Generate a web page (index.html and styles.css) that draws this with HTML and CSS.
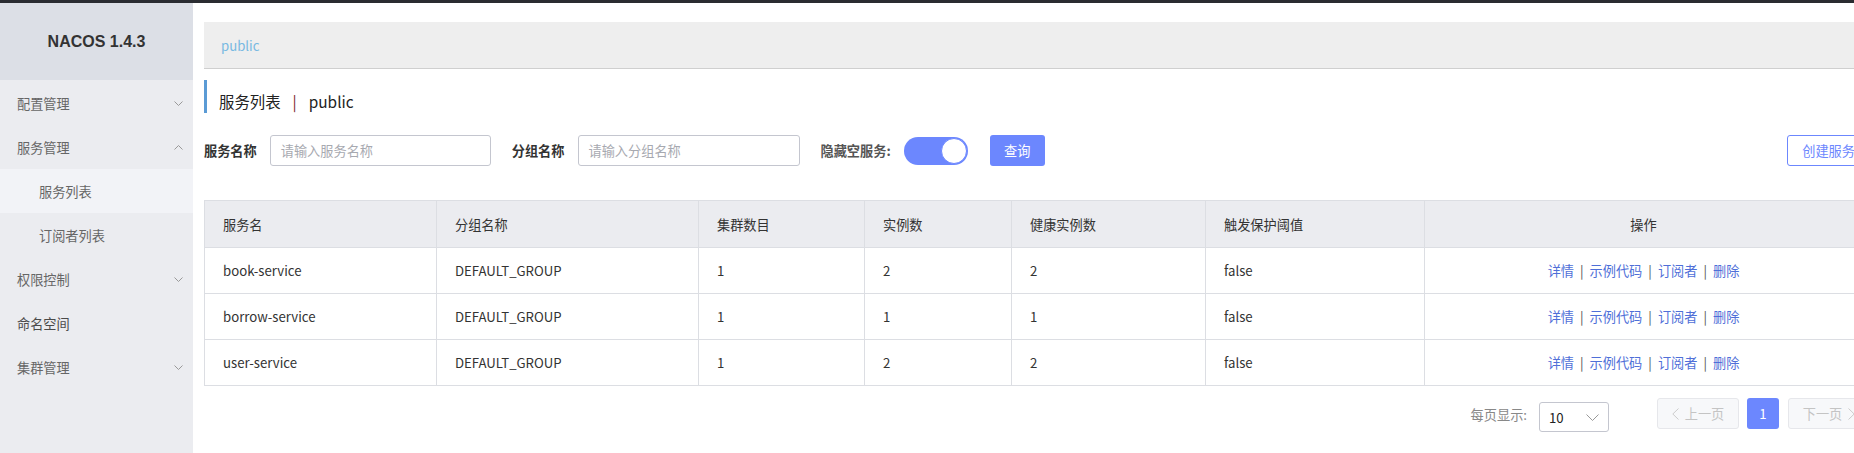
FILE: index.html
```html
<!DOCTYPE html>
<html lang="zh-CN">
<head>
<meta charset="utf-8">
<title>Nacos</title>
<link rel="stylesheet" href="styles.css">
</head>
<body>
<div class="topbar"></div>
<div class="layout">
  <aside class="sidebar">
    <div class="brand">NACOS 1.4.3</div>
    <ul class="menu">
      <li class="menu-item"><span>配置管理</span><svg class="chev" width="9" height="5" viewBox="0 0 9 5"><path d="M0.5 0.5L4.5 4.5L8.5 0.5"/></svg></li>
      <li class="menu-item"><span>服务管理</span><svg class="chev" width="9" height="5" viewBox="0 0 9 5"><path d="M0.5 4.5L4.5 0.5L8.5 4.5"/></svg></li>
      <li class="menu-item sub active"><span>服务列表</span></li>
      <li class="menu-item sub"><span>订阅者列表</span></li>
      <li class="menu-item"><span>权限控制</span><svg class="chev" width="9" height="5" viewBox="0 0 9 5"><path d="M0.5 0.5L4.5 4.5L8.5 0.5"/></svg></li>
      <li class="menu-item leaf"><span>命名空间</span></li>
      <li class="menu-item"><span>集群管理</span><svg class="chev" width="9" height="5" viewBox="0 0 9 5"><path d="M0.5 0.5L4.5 4.5L8.5 0.5"/></svg></li>
    </ul>
  </aside>
  <main class="main">
    <div class="breadcrumb"><span>public</span></div>
    <div class="page-title">服务列表<span class="sep">|</span>public</div>
    <div class="filter">
      <span class="label">服务名称</span>
      <div class="input">请输入服务名称</div>
      <span class="label label-2">分组名称</span>
      <div class="input input-2">请输入分组名称</div>
      <span class="label label-3">隐藏空服务:</span>
      <div class="switch"><span class="knob"></span></div>
      <button class="btn-primary">查询</button>
      <button class="btn-outline">创建服务</button>
    </div>
    <table class="grid">
      <colgroup>
        <col class="c1"><col class="c2"><col class="c3"><col class="c4"><col class="c5"><col class="c6"><col class="c7">
      </colgroup>
      <thead>
        <tr><th>服务名</th><th>分组名称</th><th>集群数目</th><th>实例数</th><th>健康实例数</th><th>触发保护阈值</th><th class="center">操作</th></tr>
      </thead>
      <tbody>
        <tr><td>book-service</td><td>DEFAULT_GROUP</td><td>1</td><td>2</td><td>2</td><td>false</td><td class="center ops"><a>详情</a><span class="bar">|</span><a>示例代码</a><span class="bar">|</span><a>订阅者</a><span class="bar">|</span><a>删除</a></td></tr>
        <tr><td>borrow-service</td><td>DEFAULT_GROUP</td><td>1</td><td>1</td><td>1</td><td>false</td><td class="center ops"><a>详情</a><span class="bar">|</span><a>示例代码</a><span class="bar">|</span><a>订阅者</a><span class="bar">|</span><a>删除</a></td></tr>
        <tr><td>user-service</td><td>DEFAULT_GROUP</td><td>1</td><td>2</td><td>2</td><td>false</td><td class="center ops"><a>详情</a><span class="bar">|</span><a>示例代码</a><span class="bar">|</span><a>订阅者</a><span class="bar">|</span><a>删除</a></td></tr>
      </tbody>
    </table>
    <div class="pager">
      <span class="pager-label">每页显示:</span>
      <div class="select"><span>10</span><svg width="13" height="7" viewBox="0 0 13 7"><path d="M0.5 0.5L6.5 6.5L12.5 0.5"/></svg></div>
      <button class="page-btn prev"><svg width="7" height="12" viewBox="0 0 7 12"><path d="M6.5 0.5L0.8 6L6.5 11.5"/></svg>上一页</button>
      <button class="page-num">1</button>
      <button class="page-btn next">下一页<svg width="7" height="12" viewBox="0 0 7 12"><path d="M0.5 0.5L6.2 6L0.5 11.5"/></svg></button>
    </div>
  </main>
</div>
</body>
</html>
```
FILE: styles.css
```css
html, body {
  margin: 0;
  padding: 0;
  overflow: hidden;
  background: #fff;
}
body {
  font-family: "Noto Sans CJK SC", "Noto Sans", sans-serif;
  font-size: 13.2px;
  color: #333;
  width: 1854px;
  height: 453px;
}
.topbar {
  height: 3px;
  background: #2a2c31;
}
.layout {
  display: flex;
  height: 450px;
}
.sidebar {
  flex: none;
  width: 193px;
  background: #ebecf0;
}
.brand {
  height: 77px;
  background: #dcdfe6;
  display: flex;
  align-items: center;
  justify-content: center;
  font-family: "Liberation Sans", sans-serif;
  font-weight: bold;
  font-size: 16px;
  color: #333;
}
.menu {
  list-style: none;
  margin: 1px 0 0;
  padding: 0;
}
.menu-item {
  height: 44px;
  display: flex;
  align-items: center;
  justify-content: space-between;
  padding: 0 10px 0 17px;
  color: #666;
}
.menu-item.sub {
  padding-left: 39px;
}
.menu-item.active {
  background: #f2f3f7;
}
.menu-item.leaf {
  color: #4a4a4a;
}
.chev path {
  fill: none;
  stroke: #999;
  stroke-width: 1;
}
.main {
  flex: none;
  width: 1658px;
  padding: 19px 0 0 11px;
}
.breadcrumb {
  height: 46px;
  background: #eeeeee;
  border-bottom: 1px solid #cfcfcf;
  display: flex;
  align-items: center;
  padding-left: 17px;
  color: #78b9e2;
}
.page-title {
  margin-top: 11px;
  height: 33px;
  box-sizing: border-box;
  padding-top: 8px;
  border-left: 3px solid #5b9bd5;
  padding-left: 12px;
  display: flex;
  align-items: center;
  font-size: 15.4px;
  color: #222;
}
.page-title .sep {
  margin: 0 12px;
  color: #7a1f1f;
}
.filter {
  margin-top: 22px;
  height: 31px;
  display: flex;
  align-items: center;
}
.label {
  font-weight: bold;
  color: #333;
  margin-right: 13px;
}
.label-2 {
  margin-left: 21px;
}
.label-3 {
  margin-left: 21px;
  color: #555;
}
.input {
  height: 29px;
  border: 1px solid #c4c6cf;
  border-radius: 3px;
  padding-left: 10px;
  box-sizing: content-box;
  width: 209px;
  display: flex;
  align-items: center;
  color: #a7a9b0;
}
.input-2 {
  width: 210px;
}
.switch {
  width: 64px;
  height: 28px;
  border-radius: 14px;
  background: #6c87fe;
  display: flex;
  align-items: center;
  justify-content: flex-end;
  box-sizing: border-box;
  padding-right: 1px;
}
.switch .knob {
  width: 24px;
  height: 24px;
  border-radius: 50%;
  background: #fff;
  border: 1px solid #6c87fe;
}
button {
  font-family: inherit;
  font-size: 13.2px;
  cursor: pointer;
}
.btn-primary {
  margin-left: 22px;
  width: 55px;
  height: 31px;
  border: none;
  border-radius: 3px;
  background: #6c87fe;
  color: #fff;
  padding: 0;
}
.btn-outline {
  margin-left: auto;
  margin-right: -8px;
  height: 31px;
  padding: 0 14px;
  border: 1px solid #6c87fe;
  border-radius: 3px;
  background: #fff;
  color: #6c87fe;
}
.grid {
  margin-top: 34px;
  width: 1658px;
  border-collapse: collapse;
  table-layout: fixed;
}
.c1 { width: 232px; }
.c2 { width: 262px; }
.c3 { width: 166px; }
.c4 { width: 147px; }
.c5 { width: 194px; }
.c6 { width: 219px; }
.c7 { width: 438px; }
.grid th,
.grid td {
  height: 45px;
  border: 1px solid #dcdee3;
  padding: 0 18px;
  text-align: left;
  font-weight: normal;
  color: #333;
  white-space: nowrap;
}
.grid th {
  height: 46px;
  background: #ebecf0;
}
.grid .center {
  text-align: center;
}
.ops a {
  color: #4f6fd8;
}
.ops .bar {
  margin: 0 6px;
  color: #555;
}
.pager {
  margin-top: 12px;
  margin-right: -8px;
  display: flex;
  justify-content: flex-end;
  align-items: flex-start;
}
.pager-label {
  color: #888;
  margin-top: 7px;
  margin-right: 12px;
}
.select {
  margin-top: 4px;
  width: 70px;
  height: 30px;
  box-sizing: border-box;
  border: 1px solid #c4c6cf;
  border-radius: 3px;
  display: flex;
  align-items: center;
  justify-content: space-between;
  padding: 0 9px;
  color: #222;
}
.select path {
  fill: none;
  stroke: #999;
  stroke-width: 1;
}
.page-btn path {
  fill: none;
  stroke: #ccc;
  stroke-width: 1;
}
.page-btn {
  width: 82px;
  height: 31px;
  box-sizing: border-box;
  border: 1px solid #e6e7eb;
  border-radius: 3px;
  background: #f7f8fa;
  color: #c4c4c4;
  display: flex;
  align-items: center;
  justify-content: center;
  gap: 6px;
  padding: 0;
}
.prev {
  margin-left: 48px;
}
.page-num {
  margin: 0 9px 0 8px;
  width: 32px;
  height: 31px;
  border: none;
  border-radius: 3px;
  background: #6c87fe;
  color: #fff;
  padding: 0;
}
```
